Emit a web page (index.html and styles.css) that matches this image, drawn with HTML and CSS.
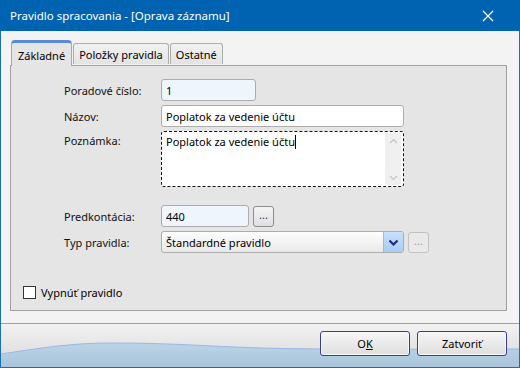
FILE: index.html
```html
<!DOCTYPE html>
<html lang="sk">
  <head>
    <meta charset="UTF-8" />
    <title>Pravidlo spracovania</title>
    <link rel="stylesheet" href="styles.css">
  </head>
  <body>
    <div class="window">
      <div class="titlebar">
        <span class="title">Pravidlo spracovania - [Oprava záznamu]</span>
        <svg class="close" width="12" height="12" viewBox="0 0 12 12">
          <path d="M1 1 L11 11 M11 1 L1 11" stroke="#fff" stroke-width="1.3" />
        </svg>
      </div>

      <div class="content">
        <div class="tabs">
          <div class="tab active">Základné</div>
          <div class="tab">Položky pravidla</div>
          <div class="tab">Ostatné</div>
        </div>

        <div class="panel">
          <div class="form">
            <label class="lbl">Poradové číslo:</label>
            <div class="field"><input class="input short" value="1" /></div>

            <label class="lbl">Názov:</label>
            <div class="field"><input class="input wide" value="Poplatok za vedenie účtu" /></div>

            <label class="lbl top">Poznámka:</label>
            <div class="field">
              <div class="memo">
                <div class="memo-text">Poplatok za vedenie účtu<span class="caret"></span></div>
                <div class="memo-scroll">
                  <svg width="9" height="6" viewBox="0 0 9 6"><path d="M1 5 L4.5 1.5 L8 5" fill="none" stroke="#c4c4c4" stroke-width="1.2" /></svg>
                  <svg width="9" height="6" viewBox="0 0 9 6"><path d="M1 1 L4.5 4.5 L8 1" fill="none" stroke="#c4c4c4" stroke-width="1.2" /></svg>
                </div>
              </div>
            </div>

            <label class="lbl gap">Predkontácia:</label>
            <div class="field gap">
              <input class="input mid" value="440" />
              <button class="dots">...</button>
            </div>

            <label class="lbl">Typ pravidla:</label>
            <div class="field">
              <div class="combo">
                <span class="combo-text">Štandardné pravidlo</span>
                <span class="combo-btn">
                  <svg width="11" height="7" viewBox="0 0 11 7"><path d="M1.5 1.5 L5.5 5.5 L9.5 1.5" fill="none" stroke="#1b2a8a" stroke-width="2.2" /></svg>
                </span>
              </div>
              <button class="dots disabled">...</button>
            </div>
          </div>

          <div class="check-row">
            <span class="checkbox"></span>
            <span>Vypnúť pravidlo</span>
          </div>
        </div>
      </div>

      <div class="footer">
        <svg class="wave" width="518" height="43" viewBox="0 0 518 43" preserveAspectRatio="none">
          <defs>
            <linearGradient id="wg" x1="0" y1="0" x2="0" y2="1">
              <stop offset="0" stop-color="#bcd4e8" />
              <stop offset="1" stop-color="#a9c4da" />
            </linearGradient>
          </defs>
          <path d="M0 30 C40 24 70 19 110 19 C170 19 200 22 260 24 C340 26 430 25 518 25 L518 43 L0 43 Z" fill="url(#wg)" />
          <path d="M0 30 C40 24 70 19 110 19 C170 19 200 22 260 24 C340 26 430 25 518 25" fill="none" stroke="#9ab8e4" stroke-width="1" />
        </svg>
        <div class="buttons">
          <button class="btn">O<u>K</u></button>
          <button class="btn">Zatvoriť</button>
        </div>
      </div>
    </div>
  </body>
</html>
```

FILE: styles.css
```css
html,
body {
  margin: 0;
  padding: 0;
}
body {
  font-family: "Noto Sans", "Open Sans", sans-serif;
  font-size: 11px;
  color: #000;
  width: 520px;
  height: 368px;
  overflow: hidden;
}
.window {
  width: 520px;
  height: 368px;
  box-sizing: border-box;
  border: 1px solid #1a6fb8;
  border-top: none;
  display: flex;
  flex-direction: column;
  background: #f3f3f3;
}
.titlebar {
  height: 31px;
  margin: 0 -1px;
  background: #0063b1;
  color: #fff;
  display: flex;
  align-items: center;
  justify-content: space-between;
  padding: 0 26px 0 10px;
  flex-shrink: 0;
}
.title {
  font-size: 11.5px;
}
.content {
  flex: 1;
  padding: 8px 12px 12px 9px;
  display: flex;
  flex-direction: column;
}
.tabs {
  display: flex;
  align-items: flex-end;
  padding-left: 1px;
  height: 26px;
  position: relative;
  z-index: 1;
}
.tab {
  height: 20px;
  line-height: 21px;
  padding: 0 5px;
  border: 1px solid #acacac;
  border-bottom: none;
  border-radius: 3px 3px 0 0;
  background: linear-gradient(#f2f2f2, #e3e3e3);
  margin-right: 1px;
  margin-bottom: 1px;
}
.tab.active {
  height: 23px;
  line-height: 25px;
  padding: 0 6px;
  margin-bottom: -1px;
  background: #e5e5e5;
  border-color: #a8a8a8;
  border-top: 3px solid #5a89dc;
  border-radius: 4px 4px 0 0;
  position: relative;
}
.panel {
  flex: 1;
  background: #e5e5e5;
  border: 1px solid #a0a0a0;
  display: flex;
  flex-direction: column;
  justify-content: space-between;
  padding: 13px 0 10px 12px;
}
.form {
  display: grid;
  grid-template-columns: 97px auto;
  row-gap: 4px;
  padding-left: 41px;
  align-items: center;
}
.lbl {
  color: #111;
}
.lbl.top {
  align-self: start;
  padding-top: 2px;
}
.lbl.gap,
.field.gap {
  margin-top: 14px;
}
.field {
  display: flex;
  align-items: center;
  gap: 4px;
}
.input {
  height: 22px;
  box-sizing: border-box;
  border: 1px solid #acacac;
  border-radius: 3px;
  background: #fff;
  font: inherit;
  padding: 0 4px;
  outline: none;
}
.input.short {
  width: 95px;
  background: #eef5fd;
}
.input.mid {
  width: 88px;
  background: #eef5fd;
}
.input.wide {
  width: 243px;
}
.memo {
  width: 243px;
  height: 56px;
  box-sizing: border-box;
  border: 1px dashed #111;
  border-radius: 3px;
  background: #fff;
  display: flex;
}
.memo-text {
  flex: 1;
  padding: 2px 4px;
}
.caret {
  display: inline-block;
  width: 1px;
  height: 14px;
  background: #000;
  vertical-align: -3px;
}
.memo-scroll {
  width: 16px;
  margin: 1px 2px 1px 0;
  background: #f0f0f0;
  display: flex;
  flex-direction: column;
  justify-content: space-between;
  align-items: center;
  padding: 5px 0 4px;
  box-sizing: border-box;
}
.dots {
  width: 21px;
  height: 21px;
  padding: 0 0 4px;
  border: 1px solid #8c8c8c;
  border-radius: 3px;
  background: linear-gradient(#f4f4f4, #e0e0e0);
  font: inherit;
  font-size: 11px;
  color: #33336a;
  line-height: 1;
}
.dots.disabled {
  border-color: #c2c2c2;
  background: #e9e9e9;
  color: #a890b8;
}
.combo {
  width: 243px;
  height: 22px;
  box-sizing: border-box;
  border: 1px solid #acacac;
  border-radius: 3px;
  background: linear-gradient(#fdfdfd, #e9e9e9);
  display: flex;
  align-items: center;
  justify-content: space-between;
}
.combo-text {
  padding-left: 4px;
}
.combo-btn {
  width: 19px;
  height: 20px;
  border-left: 1px solid #a8b8cc;
  border-radius: 0 2px 2px 0;
  background: linear-gradient(#c8e0fa, #a9ccf2);
  display: flex;
  align-items: center;
  justify-content: center;
}
.check-row {
  display: flex;
  align-items: center;
  gap: 5px;
}
.checkbox {
  width: 11px;
  height: 11px;
  border: 1px solid #333;
  background: #fff;
}
.footer {
  height: 43px;
  flex-shrink: 0;
  border-top: 1px solid #a0a0a0;
  background: linear-gradient(#f2f2f2, #d8d8d8);
  position: relative;
  display: flex;
  justify-content: flex-end;
  align-items: center;
}
.wave {
  position: absolute;
  left: 0;
  top: 0;
}
.buttons {
  position: relative;
  display: flex;
  gap: 7px;
  padding-right: 12px;
  margin-top: -5px;
}
.btn {
  width: 90px;
  height: 25px;
  border: 1px solid #3c3c98;
  border-radius: 3px;
  background: linear-gradient(#f6f6f6, #dedede);
  box-shadow: inset 0 0 0 1px #f8f8f8;
  font: inherit;
  color: #000;
}
```
